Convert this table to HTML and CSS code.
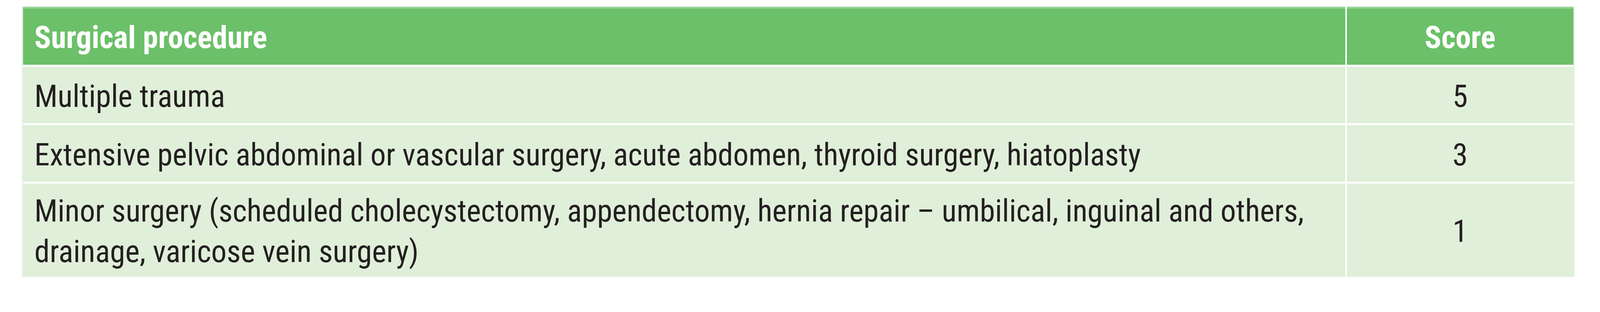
FILE: index.html
```html
<!DOCTYPE html>
<html lang="en">
<head>
<meta charset="utf-8">
<title>Surgical procedure score</title>
<link rel="stylesheet" href="styles.css">
</head>
<body>
<div class="table">
  <div class="cell head">Surgical procedure</div>
  <div class="cell head score">Score</div>

  <div class="cell">Multiple trauma</div>
  <div class="cell score">5</div>

  <div class="cell">Extensive pelvic abdominal or vascular surgery, acute abdomen, thyroid surgery, hiatoplasty</div>
  <div class="cell score">3</div>

  <div class="cell tall">Minor surgery (scheduled cholecystectomy, appendectomy, hernia repair – umbilical, inguinal and others, drainage, varicose vein surgery)</div>
  <div class="cell tall score">1</div>
</div>
</body>
</html>
```
FILE: styles.css
```css
html, body {
  margin: 0;
  background: #ffffff;
}
body {
  padding: 17px 0 0 56px;
  font-family: "Roboto", "Open Sans", sans-serif;
  font-stretch: 87.5%;
  font-size: 78.9px;
  color: #231f20;
}
.table {
  display: grid;
  grid-template-columns: 3385.3px 580.3px;
  column-gap: 3.5px;
  row-gap: 5px;
  width: max-content;
  border-left: 3.5px solid #e4f1df;
  border-right: 3.5px solid #e4f1df;
}
.cell {
  padding: 24px 29px 17px;
  line-height: 104px;
  background: #e0efd9;
}
.cell.tall {
  padding-top: 18px;
  padding-bottom: 13px;
}
.head {
  padding-top: 22px;
  padding-bottom: 18px;
  border-top: 5px solid #9dd39a;
  background: #6cc069;
  color: #ffffff;
  font-weight: 700;
}
.score {
  text-align: center;
}
.cell.tall.score {
  display: flex;
  align-items: center;
  justify-content: center;
  padding-top: 5px;
  padding-bottom: 0;
}
```
